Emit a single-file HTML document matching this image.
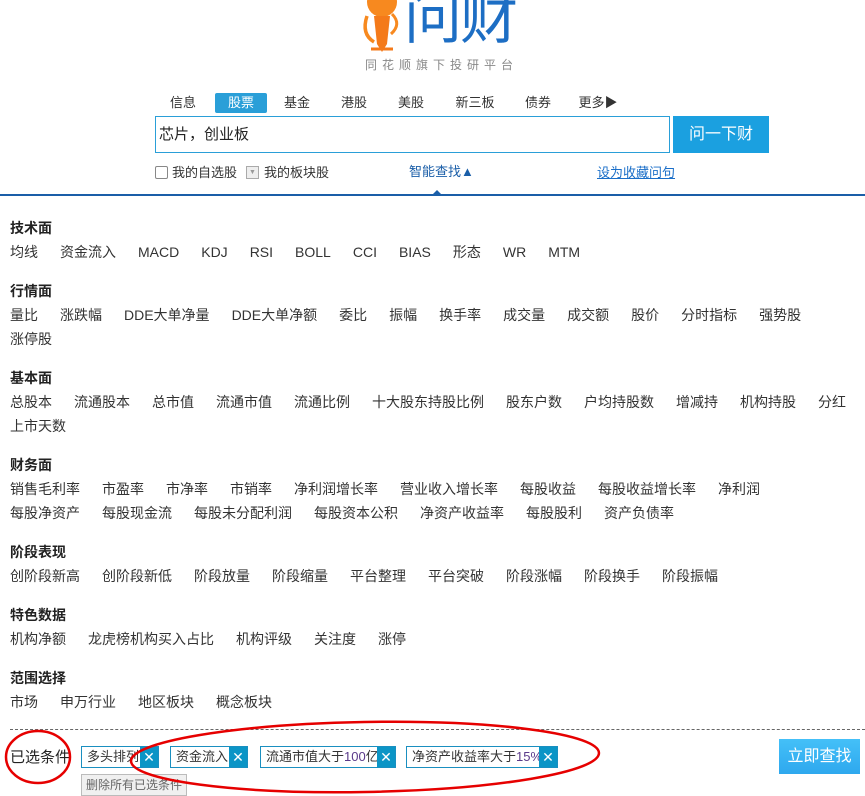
<!DOCTYPE html>
<html><head><meta charset="utf-8"><style>
*{margin:0;padding:0;box-sizing:border-box}
body{width:865px;height:795px;overflow:hidden;background:#fff;font-family:"Liberation Sans","Noto Sans CJK SC",sans-serif;color:#333;position:relative;font-size:14px}
.a{position:absolute}
.nav span{position:absolute;top:93px;height:20px;line-height:20px;font-size:13px;color:#333;text-align:center;width:52px}
.h{position:absolute;left:10px;font-weight:bold;font-size:14px;color:#222;line-height:20px}
.l{position:absolute;left:10px;white-space:nowrap;line-height:20px;font-size:14px;color:#333}
.l span{margin-right:22px}
.tag{position:absolute;top:746px;height:22px;border:1px solid #1a8fc0;font-size:13px;line-height:20px;padding-left:5px;background:#fff;color:#333}
.tag i{position:absolute;right:0;top:0;width:18px;height:20px;background:#0b95c6;color:#fff;font-style:normal;text-align:center;font-size:14px;line-height:20px}
</style></head><body>
<!-- logo -->
<svg class="a" style="left:358px;top:0" width="48" height="54" viewBox="0 0 48 54">
<circle cx="24" cy="2" r="15" fill="#f7891f"/>
<path d="M16 16 L32 16 L29 44 L24 52 L19 44 Z" fill="#f47a1a"/>
<path d="M9 16 Q3 34 16 42" stroke="#f7891f" stroke-width="3.5" fill="none"/>
<path d="M34 14 Q44 24 33 34" stroke="#f7891f" stroke-width="3" fill="none"/>
<path d="M13 49 L35 49" stroke="#f47a1a" stroke-width="3"/>
</svg>
<div class="a" style="left:404px;top:-16px;font-size:58px;color:#1d6ec4;line-height:70px;letter-spacing:-2px">问财</div>
<div class="a" style="left:365px;top:57px;font-size:12px;color:#888;letter-spacing:5px;line-height:16px">同花顺旗下投研平台</div>
<div class="nav">
<span style="left:157px">信息</span>
<span style="left:215px;background:#2a9fd8;color:#fff;border-radius:2px">股票</span>
<span style="left:271px">基金</span>
<span style="left:328px">港股</span>
<span style="left:385px">美股</span>
<span style="left:449px">新三板</span>
<span style="left:512px">债券</span>
<span style="left:570px;width:56px">更多▶</span>
</div>
<div class="a" style="left:155px;top:116px;width:515px;height:37px;border:1px solid #2a9fd8;font-size:15px;line-height:35px;padding-left:3px;color:#222">芯片，创业板</div>
<div class="a" style="left:673px;top:116px;width:96px;height:37px;background:#1ba0e0;color:#fff;font-size:16px;line-height:37px;text-align:center">问一下财</div>
<div class="a" style="left:155px;top:166px;width:13px;height:13px;border:1px solid #888;border-radius:2px"></div>
<div class="a" style="left:172px;top:164px;font-size:13px;line-height:18px">我的自选股</div>
<div class="a" style="left:246px;top:166px;width:13px;height:13px;border:1px solid #aaa;background:#eee;font-size:7px;color:#999;text-align:center;line-height:12px">▼</div>
<div class="a" style="left:264px;top:164px;font-size:13px;line-height:18px">我的板块股</div>
<div class="a" style="left:409px;top:163px;font-size:13px;line-height:18px;color:#1a5ea8">智能查找▲</div>
<div class="a" style="left:597px;top:164px;font-size:13px;line-height:18px;color:#1a6ec8;text-decoration:underline">设为收藏问句</div>
<div class="a" style="left:0;top:194px;width:865px;height:2px;background:#1a5ea8"></div>
<div class="a" style="left:433px;top:190px;width:0;height:0;border-left:4px solid transparent;border-right:4px solid transparent;border-bottom:4px solid #1a5ea8"></div>

<div class="h" style="top:218px">技术面</div>
<div class="l" style="top:242px"><span>均线</span><span>资金流入</span><span>MACD</span><span>KDJ</span><span>RSI</span><span>BOLL</span><span>CCI</span><span>BIAS</span><span>形态</span><span>WR</span><span>MTM</span></div>
<div class="h" style="top:281px">行情面</div>
<div class="l" style="top:305px"><span>量比</span><span>涨跌幅</span><span>DDE大单净量</span><span>DDE大单净额</span><span>委比</span><span>振幅</span><span>换手率</span><span>成交量</span><span>成交额</span><span>股价</span><span>分时指标</span><span>强势股</span></div>
<div class="l" style="top:329px"><span>涨停股</span></div>
<div class="h" style="top:368px">基本面</div>
<div class="l" style="top:392px"><span>总股本</span><span>流通股本</span><span>总市值</span><span>流通市值</span><span>流通比例</span><span>十大股东持股比例</span><span>股东户数</span><span>户均持股数</span><span>增减持</span><span>机构持股</span><span>分红</span></div>
<div class="l" style="top:416px"><span>上市天数</span></div>
<div class="h" style="top:455px">财务面</div>
<div class="l" style="top:479px"><span>销售毛利率</span><span>市盈率</span><span>市净率</span><span>市销率</span><span>净利润增长率</span><span>营业收入增长率</span><span>每股收益</span><span>每股收益增长率</span><span>净利润</span></div>
<div class="l" style="top:503px"><span>每股净资产</span><span>每股现金流</span><span>每股未分配利润</span><span>每股资本公积</span><span>净资产收益率</span><span>每股股利</span><span>资产负债率</span></div>
<div class="h" style="top:542px">阶段表现</div>
<div class="l" style="top:566px"><span>创阶段新高</span><span>创阶段新低</span><span>阶段放量</span><span>阶段缩量</span><span>平台整理</span><span>平台突破</span><span>阶段涨幅</span><span>阶段换手</span><span>阶段振幅</span></div>
<div class="h" style="top:605px">特色数据</div>
<div class="l" style="top:629px"><span>机构净额</span><span>龙虎榜机构买入占比</span><span>机构评级</span><span>关注度</span><span>涨停</span></div>
<div class="h" style="top:668px">范围选择</div>
<div class="l" style="top:692px"><span>市场</span><span>申万行业</span><span>地区板块</span><span>概念板块</span></div>
<div class="a" style="left:10px;top:729px;width:855px;border-top:1px dashed #666"></div>

<div class="a" style="left:10px;top:748px;font-size:15px;line-height:20px;color:#222">已选条件</div>
<div class="tag" style="left:81px;width:78px">多头排列<i>✕</i></div>
<div class="tag" style="left:170px;width:78px">资金流入<i>✕</i></div>
<div class="tag" style="left:260px;width:136px">流通市值大于<span style="color:#5a3a8a">100</span>亿<i>✕</i></div>
<div class="tag" style="left:406px;width:152px">净资产收益率大于<span style="color:#5a3a8a">15%</span><i>✕</i></div>
<div class="a" style="left:81px;top:774px;width:106px;height:22px;background:#f0f0f0;border:1px solid #bbb;font-size:12px;color:#666;line-height:20px;text-align:center">删除所有已选条件</div>
<div class="a" style="left:779px;top:739px;width:81px;height:35px;background:linear-gradient(#44c0f8,#2ea8ee);color:#fff;font-size:16px;line-height:35px;text-align:center">立即查找</div>
<svg class="a" style="left:0;top:715px" width="865" height="80">
<ellipse cx="38" cy="42" rx="32" ry="26" fill="none" stroke="#e60000" stroke-width="2.5"/>
<ellipse cx="365" cy="42" rx="234" ry="35" fill="none" stroke="#e60000" stroke-width="2.5" transform="rotate(-1 365 42)"/>
</svg>
</body></html>
